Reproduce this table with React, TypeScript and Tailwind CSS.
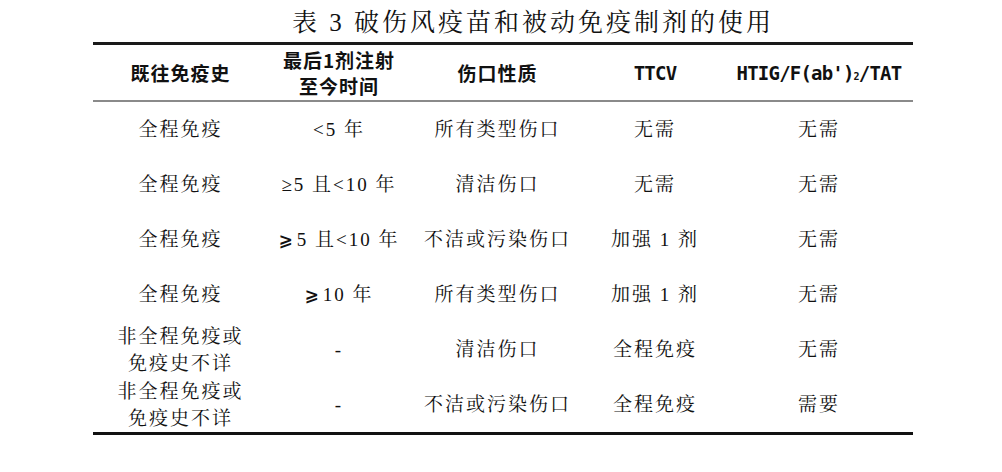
import React from "react";

const serif = "font-['Liberation_Serif','Noto_Serif_CJK_SC','Noto_Sans_CJK_SC',serif]";
const headCls =
  "font-['Noto_Sans_CJK_SC',sans-serif] font-bold text-[19px] tracking-[1px] text-[#111]";
const monoCls = "font-['DejaVu_Sans_Mono',monospace] font-bold text-[19px] tracking-[-0.8px]";

type Row = [React.ReactNode, React.ReactNode, string, string, string];

const ge = (
  <span className="font-['DejaVu_Sans','Noto_Sans_CJK_SC',sans-serif] font-bold text-[17px] mr-[2px]">⩾</span>
);

const rows: Row[] = [
  ["全程免疫", "<5 年", "所有类型伤口", "无需", "无需"],
  ["全程免疫", "≥5 且<10 年", "清洁伤口", "无需", "无需"],
  ["全程免疫", <span>{ge}{"5 且<10 年"}</span>, "不洁或污染伤口", "加强 1 剂", "无需"],
  ["全程免疫", <span>{ge}{"10 年"}</span>, "所有类型伤口", "加强 1 剂", "无需"],
  [
    <>
      <div>非全程免疫或</div>
      <div>免疫史不详</div>
    </>,
    "-",
    "清洁伤口",
    "全程免疫",
    "无需",
  ],
  [
    <>
      <div>非全程免疫或</div>
      <div>免疫史不详</div>
    </>,
    "-",
    "不洁或污染伤口",
    "全程免疫",
    "需要",
  ],
];

export default function App() {
  return (
    <div className="w-[1002px] h-[472px] bg-white overflow-hidden">
      <div
        className={`h-[42px] flex items-center pl-[292px] pt-[3px] text-[25px] tracking-[3px] text-[#111] ${serif}`}
      >
        表 3 破伤风疫苗和被动免疫制剂的使用
      </div>
      <div className="ml-[93px] w-[820px]">
        <div className="grid grid-cols-[175px_142px_175px_140px_188px] h-[60px] border-t-[3px] border-t-[#1a1a1a] border-b-2 border-b-[#8a8a8a]">
          <div className={`flex items-center justify-center pt-[2px] ${headCls}`}>既往免疫史</div>
          <div className={`flex flex-col items-center justify-center leading-[26px] ${headCls}`}>
            <div>最后1剂注射</div>
            <div>至今时间</div>
          </div>
          <div className={`flex items-center justify-center pt-[2px] ${headCls}`}>伤口性质</div>
          <div className={`flex items-center justify-center pt-[2px] text-[#111] ${monoCls}`}>TTCV</div>
          <div className={`flex items-center justify-center pt-[2px] text-[#111] ${monoCls}`}>
            HTIG/F(ab')<span className="text-[10px] self-end mb-[16px]">2</span>/TAT
          </div>
        </div>
        <div className="border-b-[3px] border-b-[#111]">
          {rows.map((r, i) => (
            <div
              key={i}
              className={`grid grid-cols-[175px_142px_175px_140px_188px] h-[55px] text-[19px] tracking-[2px] text-[#111] ${serif}`}
            >
              {r.map((c, j) => (
                <div
                  key={j}
                  className="flex flex-col items-center justify-center leading-[27px] text-center whitespace-nowrap"
                >
                  {c}
                </div>
              ))}
            </div>
          ))}
        </div>
      </div>
    </div>
  );
}
